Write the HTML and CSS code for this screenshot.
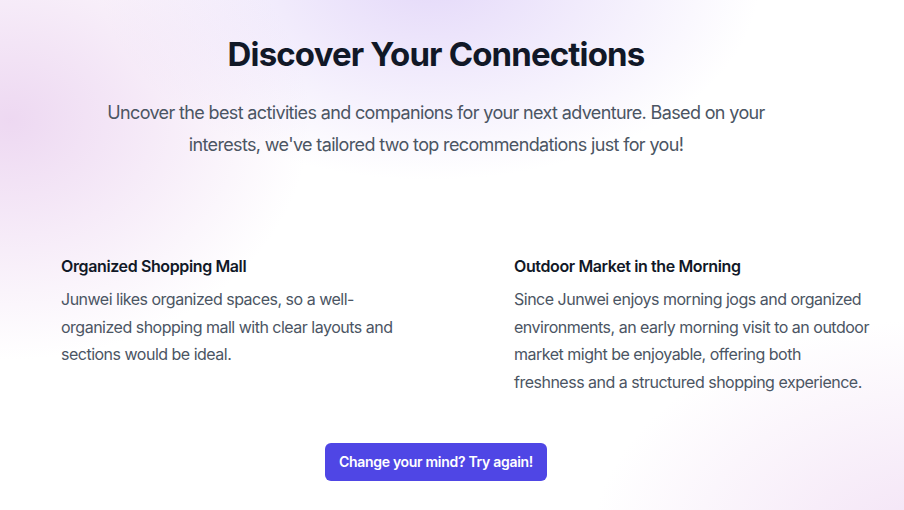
FILE: index.html
```html
<!DOCTYPE html>
<html lang="en">
<head>
<meta charset="utf-8">
<title>Discover Your Connections</title>
<link rel="stylesheet" href="styles.css">
</head>
<body>
<div class="bg"></div>
<main class="page">
  <header class="hero">
    <h1 class="title">Discover Your Connections</h1>
    <p class="lead">Uncover the best activities and companions for your next adventure. Based on your interests, we've tailored two top recommendations just for you!</p>
  </header>
  <section class="cards">
    <article class="card">
      <h2 class="card-title">Organized Shopping Mall</h2>
      <p class="card-text">Junwei likes organized spaces, so a well-organized shopping mall with clear layouts and sections would be ideal.</p>
    </article>
    <article class="card">
      <h2 class="card-title">Outdoor Market in the Morning</h2>
      <p class="card-text">Since Junwei enjoys morning jogs and organized environments, an early morning visit to an outdoor market might be enjoyable, offering both freshness and a structured shopping experience.</p>
    </article>
  </section>
  <div class="actions">
    <button class="btn" type="button">Change your mind? Try again!</button>
  </div>
</main>
</body>
</html>
```
FILE: styles.css
```css
* { box-sizing: border-box; }
html, body { margin: 0; padding: 0; }
body {
  width: 904px;
  height: 510px;
  overflow: hidden;
  font-family: Inter, "Noto Sans", sans-serif;
  background: #ffffff;
  color: #111827;
  position: relative;
}
.bg {
  position: absolute;
  inset: 0;
  z-index: 0;
  background:
    radial-gradient(ellipse 300px 240px at 10px 120px, rgba(230, 200, 236, 0.7), rgba(230, 200, 236, 0) 100%),
    radial-gradient(ellipse 330px 200px at 430px -20px, rgba(222, 208, 248, 0.8), rgba(222, 208, 248, 0) 100%),
    radial-gradient(ellipse 340px 230px at 930px 550px, rgba(238, 216, 242, 0.75), rgba(238, 216, 242, 0) 100%);
}
.page {
  position: relative;
  z-index: 1;
  width: 872px;
  display: flex;
  flex-direction: column;
}
.hero {
  display: flex;
  flex-direction: column;
  align-items: center;
  text-align: center;
  padding-top: 32px;
}
.title {
  margin: 0;
  font-size: 33px;
  line-height: 44px;
  font-weight: 700;
  letter-spacing: -0.85px;
  color: #111827;
}
.lead {
  margin: 21px 0 0;
  width: 680px;
  font-size: 18px;
  line-height: 32px;
  letter-spacing: -0.64px;
  color: #4b5563;
}
.cards {
  display: grid;
  grid-template-columns: 357px 357px;
  column-gap: 96px;
  padding-left: 61px;
  margin-top: 93px;
}
.card-title {
  margin: 0;
  font-size: 16px;
  line-height: 24px;
  font-weight: 600;
  letter-spacing: -0.38px;
  color: #111827;
}
.card-text {
  margin: 8px 0 0;
  font-size: 16px;
  line-height: 27.5px;
  letter-spacing: -0.5px;
  color: #4b5563;
}
.actions {
  display: flex;
  justify-content: center;
  margin-top: 47px;
}
.btn {
  font-family: Inter, "Noto Sans", sans-serif;
  font-size: 14px;
  line-height: 20px;
  font-weight: 600;
  letter-spacing: -0.3px;
  color: #ffffff;
  background: #4f46e5;
  border: none;
  border-radius: 6px;
  padding: 9px 14px;
  cursor: pointer;
}
```
